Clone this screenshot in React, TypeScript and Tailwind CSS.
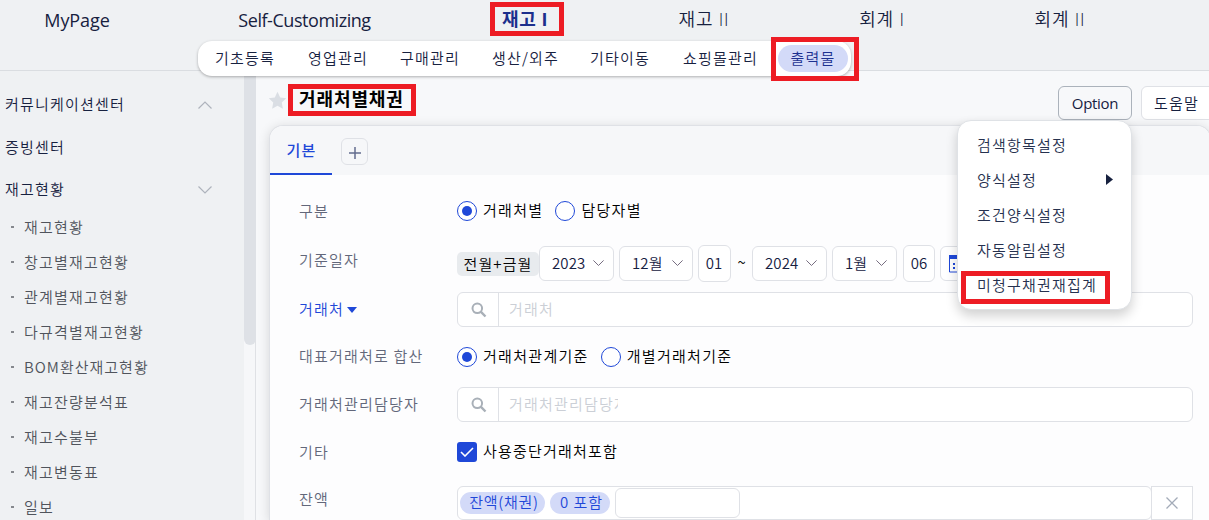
import type { ReactNode } from 'react';

const topMenu = [
  { label: 'MyPage', cls: 'w-[154px] pt-[3px] text-[18px] font-normal tracking-[-0.1px]' },
  { label: 'Self-Customizing', cls: 'w-[301px] pt-[3px] text-[18px] font-normal tracking-[-0.45px]' },
  { label: '재고 I', cls: 'w-[140px] font-bold text-[#1c2f8c] text-[18px] tracking-[0.5px]' },
  { label: '재고 II', cls: 'w-[218px] text-[18px] tracking-[0.8px]' },
  { label: '회계 I', cls: 'w-[138px] text-[18px] tracking-[0.8px]' },
  { label: '회계 II', cls: 'w-[218px] text-[18px] tracking-[0.8px]' },
];

const subMenu = [
  { label: '기초등록', cls: 'w-[93px]' },
  { label: '영업관리', cls: 'w-[92px]' },
  { label: '구매관리', cls: 'w-[92px]' },
  { label: '생산/외주', cls: 'w-[98px]' },
  { label: '기타이동', cls: 'w-[93px]' },
  { label: '쇼핑몰관리', cls: 'w-[95px]' },
];

const sideItems = [
  '재고현황',
  '창고별재고현황',
  '관계별재고현황',
  '다규격별재고현황',
  'BOM환산재고현황',
  '재고잔량분석표',
  '재고수불부',
  '재고변동표',
  '일보',
];

function Chevron({ up = false, className = '' }: { up?: boolean; className?: string }) {
  return (
    <svg viewBox="0 0 14 8" fill="none" stroke="currentColor" strokeWidth="1.2" className={className}>
      <path d={up ? 'M.5 7.5 7 1l6.5 6.5' : 'M.5.5 7 7 13.5.5'} />
    </svg>
  );
}

function Highlight({ className }: { className: string }) {
  return <div className={`pointer-events-none absolute z-30 border-[5px] border-[#ed1c24] ${className}`} />;
}

function Row({ label, height, children }: { label: ReactNode; height: string; children: ReactNode }) {
  return (
    <div className={`flex shrink-0 ${height}`}>
      <div className="flex w-[158px] shrink-0 items-center pb-px text-[#62677a]">{label}</div>
      <div className="flex min-w-0 flex-1 items-center">{children}</div>
    </div>
  );
}

function Radio({ label, checked = false }: { label: string; checked?: boolean }) {
  return (
    <label className="mr-3 flex items-center text-black">
      <span className="mr-[6px] flex size-5 items-center justify-center rounded-full border border-[#1f48d8] bg-white">
        {checked && <span className="size-[10px] rounded-full bg-[#1f48d8]" />}
      </span>
      <span className="pb-[2px] tracking-[1.3px]">{label}</span>
    </label>
  );
}

function DateSelect({ label, className }: { label: string; className: string }) {
  return (
    <div className={`flex h-[35px] shrink-0 items-center justify-between rounded-[6px] border border-[#dfe1e6] bg-white pr-[9px] text-[#16203f] ${className}`}>
      <span className="pb-px tracking-[0.1px]">{label}</span>
      <Chevron className="w-[11px] text-[#6d6478]" />
    </div>
  );
}

function SearchField({ placeholder, textClass = '' }: { placeholder: string; textClass?: string }) {
  return (
    <div className="flex h-[35px] w-[736px] overflow-hidden rounded-[6px] border border-[#dfe1e6] bg-white">
      <div className="flex w-[41px] items-center justify-center border-r border-[#dfe1e6]">
        <svg viewBox="0 0 16 16" fill="none" stroke="#a9b0b8" className="mt-px ml-px size-4">
          <circle cx="6.3" cy="6.3" r="4.8" strokeWidth="2" />
          <path d="m9.7 9.7 4.8 4.8" strokeWidth="2.4" />
        </svg>
      </div>
      <div className={`ml-[10px] flex items-center overflow-hidden whitespace-nowrap pb-px text-[#cbcfd6] ${textClass}`}>{placeholder}</div>
    </div>
  );
}

function Header() {
  return (
    <header className="relative z-10 h-[71px] shrink-0 border-b border-[#dadde1] bg-[#eff1f3]">
      <nav className="flex h-[37px] font-['Open_Sans','Noto_Sans_CJK_KR',sans-serif] tracking-normal text-[#17213f]">
        {topMenu.map((m) => (
          <div key={m.label} className={`flex shrink-0 items-center justify-center ${m.cls}`}>
            {m.label}
          </div>
        ))}
      </nav>
      <nav className="absolute top-[41px] left-[198px] flex h-[35px] w-[653px] items-center rounded-[14px] bg-white pl-[17px] text-[#17213f] shadow-[0_1px_3px_rgba(0,0,0,0.3)]">
        {subMenu.map((m) => (
          <div key={m.label} className={`shrink-0 pb-[2px] ${m.cls}`}>
            {m.label}
          </div>
        ))}
        <div className="flex h-[27px] w-[70px] shrink-0 items-center justify-center rounded-full bg-[#d3daf8] pb-[2px] text-[#1d3190]">출력물</div>
      </nav>
    </header>
  );
}

function Sidebar() {
  return (
    <aside className="flex w-64 shrink-0 bg-[#eff1f3]">
      <div className="w-[244px] text-[#17213f]">
        <div className="mt-[11px] flex h-[43px] items-center justify-between pr-[32px] pl-[5px]">
          커뮤니케이션센터
          <Chevron up className="mt-[3px] w-[14px] text-[#aeb3bc]" />
        </div>
        <div className="flex h-[43px] items-center pl-[5px]">증빙센터</div>
        <div className="flex h-[41px] items-center justify-between pr-[32px] pl-[5px]">
          재고현황
          <Chevron className="mt-[2px] w-[14px] text-[#aeb3bc]" />
        </div>
        <ul className="text-[#50545c]">
          {sideItems.map((s) => (
            <li key={s} className="flex h-[35px] items-center pl-[11px]">
              <span className="mr-[10px] h-[2px] w-[3px] bg-[#85888d]" />
              {s.startsWith('BOM') ? <span className="tracking-[1px]">{s}</span> : s}
            </li>
          ))}
        </ul>
      </div>
      <div className="w-3 border-r border-[#dfe1e5] bg-[#f6f7f9]">
        <div className="h-[274px] w-3 rounded-b-[6px] bg-[#dee1e6]" />
      </div>
    </aside>
  );
}

function OptionMenu() {
  return (
    <div className="absolute top-[120px] left-[957px] z-20 flex w-[175px] flex-col rounded-[14px] border border-[#dfe2e6] bg-white pt-[6px] pb-[7px] text-[#26314f] shadow-[0_6px_12px_rgba(0,0,0,0.18)]">
      {['검색항목설정', '양식설정', '조건양식설정', '자동알림설정', '미청구채권재집계'].map((m) => (
        <div key={m} className="flex h-[35px] items-center justify-between pr-[18px] pl-[19px] whitespace-nowrap">
          {m}
          {m === '양식설정' && (
            <svg viewBox="0 0 7 11" className="h-[11px] w-[7px]">
              <path d="M0 0 7 5.5 0 11Z" fill="#17213f" />
            </svg>
          )}
        </div>
      ))}
    </div>
  );
}

function SearchForm() {
  return (
    <section className="ml-[13px] flex w-[942px] flex-1 shrink-0 flex-col overflow-hidden rounded-t-[14px] border border-b-0 border-[#dfe1e6] bg-[#fdfdfe] shadow-[0_2px_12px_rgba(0,0,0,0.14)]">
      <div className="flex h-[49px] shrink-0 bg-[#f6f7f9]">
        <div className="flex w-[62px] items-center justify-center border-b-2 border-[#1f48d8] pl-px font-medium text-[#1f48d8]">기본</div>
        <div className="mt-3 ml-[9px] flex size-[27px] items-center justify-center rounded-[6px] border border-[#dfe1e6]">
          <svg viewBox="0 0 12 12" stroke="#636d8e" strokeWidth="1.5" className="mt-[2px] size-3">
            <path d="M6 0v12M0 6h12" />
          </svg>
        </div>
      </div>
      <div className="flex w-[924px] flex-col pt-3 pl-[29px]">
        <Row label="구분" height="h-12">
          <Radio label="거래처별" checked />
          <Radio label="담당자별" />
        </Row>
        <Row label="기준일자" height="h-[50px]">
          <div className="mt-[7px] flex items-center whitespace-nowrap">
            <div className="flex h-6 w-[82px] items-center justify-center rounded-[5px] bg-[#e8ebee] tracking-[1.1px] text-black">전월+금월</div>
            <DateSelect label="2023" className="w-[75px] pl-3" />
            <DateSelect label="12월" className="ml-[5px] w-[74px] pl-3" />
            <div className="ml-[5px] flex h-[37px] w-[33px] items-center justify-center rounded-[6px] border border-[#dfe1e6] bg-white pr-px pb-px tracking-normal text-[#16203f]">01</div>
            <span className="w-[21px] pb-1 text-center tracking-normal text-black">~</span>
            <DateSelect label="2024" className="w-[75px] pl-3" />
            <DateSelect label="1월" className="ml-[5px] w-[65px] pl-3" />
            <div className="ml-[6px] flex h-[37px] w-8 items-center justify-center rounded-[6px] border border-[#dfe1e6] bg-white pb-px tracking-normal text-[#16203f]">06</div>
            <div className="ml-[5px] flex h-[35px] w-[36px] items-center rounded-[6px] border border-[#dfe1e6] bg-white pl-2">
              <svg viewBox="0 0 17 18" className="h-[18px] w-[17px]">
                <path d="M.5 1h16v16H.5z" fill="white" stroke="#1f48d8" />
                <path d="M0 0h17v4H0z" fill="#1f48d8" />
                <path d="M4 8h2v2H4zM8 8h2v2H8zM12 8h2v2h-2zM4 12h2v2H4zM8 12h2v2H8z" fill="#1f48d8" />
              </svg>
            </div>
          </div>
        </Row>
        <Row
          height="h-12"
          label={
            <span className="flex items-center text-[#1f48d8]">
              거래처
              <svg viewBox="0 0 10 6" className="mt-[2px] ml-[3px] h-[6px] w-[10px]">
                <path d="M0 0h10L5 6Z" fill="#1f48d8" />
              </svg>
            </span>
          }
        >
          <SearchField placeholder="거래처" />
        </Row>
        <Row label="대표거래처로 합산" height="h-[47px]">
          <Radio label="거래처관계기준" checked />
          <Radio label="개별거래처기준" />
        </Row>
        <Row label="거래처관리담당자" height="h-12">
          <SearchField placeholder="거래처관리담당자" textClass="w-[109px]" />
        </Row>
        <Row label="기타" height="h-12">
          <span className="mr-[6px] flex size-5 items-center justify-center rounded-[3px] bg-[#1f48d8]">
            <svg viewBox="0 0 14 10" fill="none" stroke="white" strokeWidth="1.6" className="h-[10px] w-[14px]">
              <path d="m1 5 4 4 8-8" />
            </svg>
          </span>
          <span className="pb-[2px] text-black">사용중단거래처포함</span>
        </Row>
        <Row label="잔액" height="h-[46px]">
          <div className="mt-[8px] flex h-[34px]">
            <div className="flex w-[695px] items-center rounded-[6px] border border-[#dfe1e6] bg-white pl-[2px] whitespace-nowrap text-[#1f48d8]">
              <span className="flex h-[22px] w-[85px] items-center justify-center rounded-full bg-[#d3daf8] pb-[2px] pl-[3px] tracking-[0.7px]">잔액(채권)</span>
              <span className="ml-[5px] flex h-[22px] w-[60px] items-center justify-center rounded-full bg-[#d3daf8] pb-[2px] pl-[3px] tracking-[0.9px]">0 포함</span>
              <span className="ml-[5px] h-[30px] w-[125px] rounded-[6px] border border-[#dfe1e6]" />
            </div>
            <div className="-ml-px flex w-[42px] items-center justify-center border border-[#dfe1e6] bg-white">
              <svg viewBox="0 0 12 12" stroke="#a3abb8" strokeWidth="1.3" className="size-3">
                <path d="m.5.5 11 11m0-11-11 11" />
              </svg>
            </div>
          </div>
        </Row>
      </div>
    </section>
  );
}

export default function App() {
  return (
    <div className="relative flex h-[520px] w-[1209px] flex-col overflow-hidden bg-[#f7f8fa] font-['Noto_Sans_CJK_KR',sans-serif] text-[15px] leading-[20px] font-[350] tracking-[1.2px]">
      <Header />
      <div className="flex min-h-0 flex-1">
        <Sidebar />
        <main className="flex min-w-0 flex-1 flex-col overflow-hidden">
          <div className="flex h-[54px] shrink-0">
            <svg viewBox="0 0 24 24" className="mt-[20px] ml-[12px] size-[19px] shrink-0">
              <path d="m12 1 3.4 7.2 7.6 1-5.6 5.4 1.4 7.9L12 18.7l-6.8 3.8 1.4-7.9L1 9.2l7.6-1Z" fill="#dadee4" />
            </svg>
            <h1 className="mt-[17px] ml-[12px] w-[759px] shrink-0 text-[18px] font-bold tracking-[0.9px] text-black">거래처별채권</h1>
            <button className="mt-[15px] flex h-[34px] w-[74px] shrink-0 items-center justify-center rounded-[6px] border border-[#abb2bb] font-['Open_Sans',sans-serif] font-normal tracking-[-0.3px] text-[#16203f]">Option</button>
            <button className="mt-[15px] ml-[9px] flex h-[34px] w-[80px] shrink-0 items-center rounded-[6px] border border-[#dfe1e6] bg-white pb-px pl-3 text-[#16203f]">도움말</button>
          </div>
          <SearchForm />
        </main>
      </div>
      <OptionMenu />
      <Highlight className="top-[2px] left-[490px] h-[34px] w-[74px]" />
      <Highlight className="top-[37px] left-[771px] h-[44px] w-[88px]" />
      <Highlight className="top-[84px] left-[288px] h-[32px] w-[128px]" />
      <Highlight className="top-[271px] left-[961px] h-[33px] w-[149px]" />
    </div>
  );
}
